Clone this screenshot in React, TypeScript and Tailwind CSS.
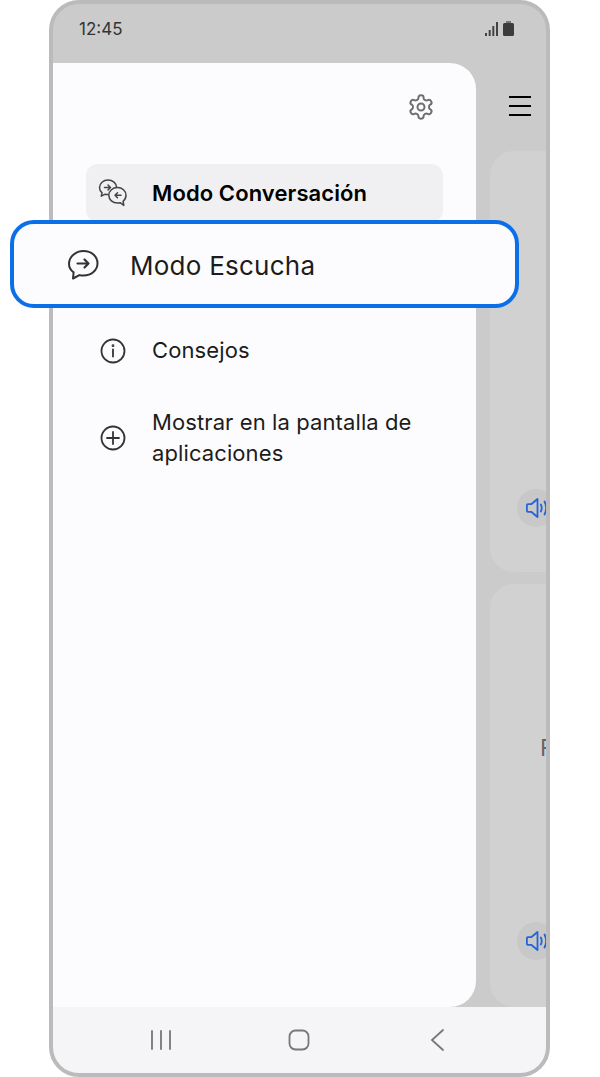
import React from 'react';

const Bubble = ({ className }: { className?: string }) => (
  <svg viewBox="0 0 32 32" fill="none" stroke="#333" strokeWidth="2" strokeLinecap="round" strokeLinejoin="round" className={className}>
    <path d="M16.500 2C8.800 2 2 7.700 2 14.800c0 3.500 1.700 6.500 4.600 8.600L6 29.500l6.400-3.400c1.300.3 2.700.5 4.100.5 7.800 0 14-5.300 14-12.300S24.300 2 16.500 2z" />
    <path d="M10.500 14.500h11M17.500 10.500l4 4-4 4" strokeWidth="2.200" />
  </svg>
);

const ConversationIcon = () => (
  <svg viewBox="0 0 30 30" fill="none" stroke="#444" strokeWidth="1.500" strokeLinecap="round" strokeLinejoin="round" className="h-[30px] w-[30px]">
    <path d="M10 2C5.300 2 1.500 5.300 1.500 9.600c0 2.100 1 4 2.600 5.300l-.9 3.300 4-2c.9.300 1.800.4 2.800.4 4.700 0 8.500-3.300 8.500-7.300S14.700 2 10 2z" />
    <path d="M6.500 9.500h6M10 7l2.500 2.500L10 12" strokeWidth="1.500" />
    <path d="M19.500 9.500c-4.800 0-8.700 3.400-8.700 7.800s3.900 7.800 8.700 7.800c.9 0 1.800-.1 2.600-.4l3.700 2.700-.7-4.100c1.800-1.400 2.900-3.500 2.900-6 0-4.400-3.800-7.800-8.500-7.800z" fill="#f0f0f2" />
    <path d="M23 17.300h-6M19.500 14.800L17 17.300l2.500 2.500" strokeWidth="1.500" />
  </svg>
);

const RoundIcon = ({ kind }: { kind: 'info' | 'plus' }) => (
  <svg viewBox="0 0 26 26" fill="none" stroke="#333" strokeWidth="1.800" strokeLinecap="round" className="h-[26px] w-[26px]">
    <circle cx="13" cy="13" r="11.500" />
    {kind === 'info' ? (
      <>
        <path d="M13 11.500v7" />
        <circle cx="13" cy="7.700" r="0.500" fill="#333" />
      </>
    ) : (
      <path d="M13 7v12M7 13h12" />
    )}
  </svg>
);

const Gear = () => (
  <svg viewBox="0 0 24 24" fill="none" stroke="#6e6e6f" strokeWidth="1.700" strokeLinecap="round" strokeLinejoin="round" className="h-[28px] w-[28px]">
    <path d="M12.220 2h-.440a2 2 0 0 0-2 2v.180a2 2 0 0 1-1 1.730l-.430.250a2 2 0 0 1-2 0l-.150-.080a2 2 0 0 0-2.730.730l-.220.380a2 2 0 0 0 .730 2.730l.150.100a2 2 0 0 1 1 1.720v.510a2 2 0 0 1-1 1.740l-.150.090a2 2 0 0 0-.730 2.730l.220.380a2 2 0 0 0 2.730.730l.150-.080a2 2 0 0 1 2 0l.430.250a2 2 0 0 1 1 1.730V20a2 2 0 0 0 2 2h.440a2 2 0 0 0 2-2v-.180a2 2 0 0 1 1-1.730l.430-.250a2 2 0 0 1 2 0l.150.080a2 2 0 0 0 2.730-.730l.220-.390a2 2 0 0 0-.730-2.730l-.150-.080a2 2 0 0 1-1-1.740v-.500a2 2 0 0 1 1-1.740l.150-.090a2 2 0 0 0 .730-2.730l-.220-.380a2 2 0 0 0-2.730-.730l-.150.080a2 2 0 0 1-2 0l-.430-.250a2 2 0 0 1-1-1.730V4a2 2 0 0 0-2-2z" />
    <circle cx="12" cy="12" r="3" />
  </svg>
);

const Speaker = () => (
  <svg viewBox="0 0 26 26" fill="none" stroke="#2563d8" strokeWidth="1.800" strokeLinejoin="round" strokeLinecap="round" className="h-[26px] w-[26px] shrink-0">
    <path d="M1.800 9.200h3.400L11.500 4v18l-6.300-5.200H1.800a.900.900 0 0 1-.900-.900v-5.800a.900.900 0 0 1 .900-.900z" />
    <path d="M14.800 9.500c1.200 2.300 1.200 4.700 0 7M18.500 6.500c2.200 4.300 2.200 8.700 0 13" />
  </svg>
);

const MenuItem = ({ icon, children, className }: { icon: React.ReactNode; children: React.ReactNode; className?: string }) => (
  <div className={`flex items-center ${className ?? ''}`}>
    <div className="flex w-[66px] shrink-0 justify-center pr-[12px]">{icon}</div>
    <div className="text-[22px] leading-[31px] tracking-[0.1px] text-[#1c1c1c]">{children}</div>
  </div>
);

const SpeakerButton = () => (
  <div className="flex h-[38px] w-[38px] shrink-0 items-center rounded-full bg-[#c8c8c9] pl-[9px]">
    <Speaker />
  </div>
);

export default function App() {
  return (
    <div className="h-[1077px] w-[600px] overflow-hidden bg-white font-['Inter',sans-serif]">
      <div className="ml-[49px] flex h-[1077px] w-[501px] flex-col rounded-[30px] border-4 border-[#bbbbbb] bg-[#cbcbcc]">
        {/* status bar */}
        <div className="flex h-[59px] shrink-0 items-start justify-between pl-[26px] pr-[32px] pt-[15px]">
          <span className="text-[17px] leading-[20px] text-[#333]">12:45</span>
          <div className="flex items-center gap-[5px] pt-[2px]">
            <svg viewBox="0 0 13 14" className="h-[14px] w-[13px]" fill="#444">
              <rect x="0" y="11" width="2" height="3" />
              <rect x="3.700" y="8" width="2" height="6" />
              <rect x="7.300" y="4" width="2" height="10" />
              <rect x="11" y="0" width="2" height="14" />
            </svg>
            <svg viewBox="0 0 11 15" className="h-[15px] w-[11px]" fill="#3c3c3c">
              <rect x="3" y="0" width="5" height="2" fill="#777" />
              <rect x="0" y="2" width="11" height="13" rx="1.500" />
            </svg>
          </div>
        </div>

        <div className="flex min-h-0 flex-1">
          {/* drawer */}
          <div className="relative z-10 w-[423px] shrink-0 rounded-r-[26px] bg-[#fcfcfe]">
            <div className="flex h-[101px] justify-end pr-[41px] pt-[30px]">
              <Gear />
            </div>
            <div className="ml-[33px] w-[357px]">
              <MenuItem icon={<ConversationIcon />} className="h-[58px] rounded-[12px] bg-[#f0f0f2]">
                <span className="font-semibold text-black">Modo Conversación</span>
              </MenuItem>
            </div>
            {/* highlighted row */}
            <div className="relative z-10 -mt-[2px] ml-[-43px] flex h-[88px] w-[509px] items-center rounded-[24px] border-4 border-[#0b6fe8] bg-[#fcfcfe] pt-[2px]">
              <div className="ml-[53px] mr-[31px]">
                <Bubble className="h-[32px] w-[32px]" />
              </div>
              <span className="text-[26px] tracking-[0.25px] text-[#1c1c1c]">Modo Escucha</span>
            </div>
            <div className="ml-[33px] w-[357px]">
              <MenuItem icon={<RoundIcon kind="info" />} className="mt-[14px] h-[57px]">
                Consejos
              </MenuItem>
              <MenuItem icon={<RoundIcon kind="plus" />} className="mt-[28px]">
                Mostrar en la pantalla de aplicaciones
              </MenuItem>
            </div>
          </div>

          {/* content behind the drawer */}
          <div className="flex min-w-0 flex-1 flex-col overflow-hidden pl-[14px]">
            <div className="flex h-[88px] shrink-0 flex-col gap-[7px] pl-[19px] pt-[33px]">
              <div className="h-[2px] w-[22px] bg-black" />
              <div className="h-[2px] w-[22px] bg-black" />
              <div className="h-[2px] w-[22px] bg-black" />
            </div>
            <div className="flex h-[421px] w-[80px] shrink-0 items-end rounded-[24px] bg-[#d1d1d2] pb-[45px] pl-[27px]">
              <SpeakerButton />
            </div>
            <div className="mt-[12px] flex h-[423px] w-[80px] shrink-0 flex-col rounded-[24px] bg-[#d1d1d2]">
              <span className="ml-[50px] mt-[150px] text-[23px] leading-[28px] text-[#666]">F</span>
              <div className="ml-[27px] mt-[160px]">
                <SpeakerButton />
              </div>
            </div>
          </div>
        </div>

        {/* nav bar */}
        <div className="relative z-10 grid h-[66px] shrink-0 grid-cols-3 items-center rounded-b-[26px] bg-[#f5f5f7] pb-[1px]">
          <svg viewBox="0 0 22 20" className="ml-[97px] h-[20px] w-[22px]" stroke="#777" strokeWidth="1.800" strokeLinecap="round">
            <path d="M2 1v18M11 1v18M20 1v18" />
          </svg>
          <svg viewBox="0 0 22 22" className="ml-[71px] h-[22px] w-[22px]" fill="none" stroke="#777" strokeWidth="1.800">
            <rect x="1.500" y="1.500" width="19" height="19" rx="6" />
          </svg>
          <svg viewBox="0 0 14 22" className="ml-[48px] h-[22px] w-[14px]" fill="none" stroke="#777" strokeWidth="1.800" strokeLinecap="round">
            <path d="M13 1L2 11l11 10" />
          </svg>
        </div>
      </div>
    </div>
  );
}
